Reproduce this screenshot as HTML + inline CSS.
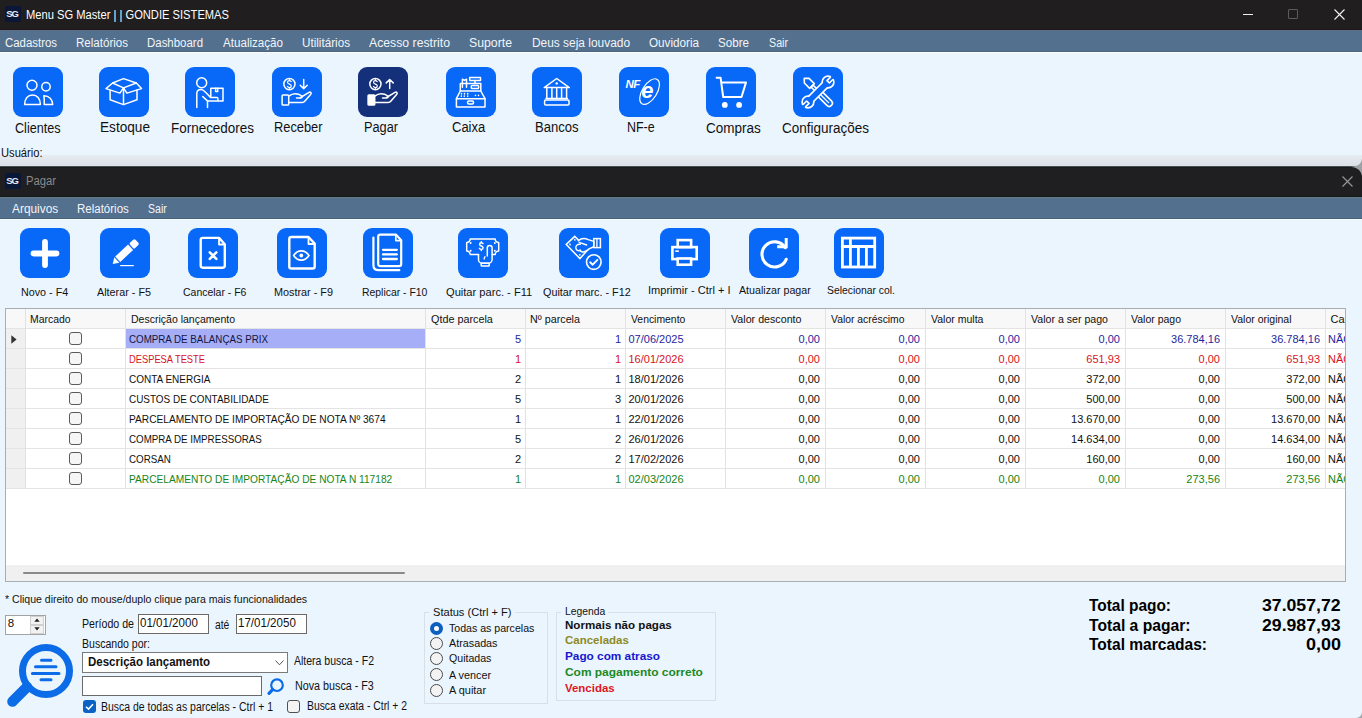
<!DOCTYPE html><html><head><meta charset="utf-8"><style>
html,body{margin:0;padding:0;width:1362px;height:718px;overflow:hidden;background:#ebf5fe;}
body{position:relative;font-family:"Liberation Sans",sans-serif;}
.r{position:absolute;}
.t{position:absolute;white-space:nowrap;transform-origin:0 0;}
svg.r{overflow:visible;}
</style></head><body>
<div class="r" style="left:0px;top:0px;width:1362px;height:30px;background:#201e1f;"></div>
<div class="r" style="left:0px;top:28px;width:1362px;height:2px;background:#22191f;"></div>
<div class="r" style="left:5px;top:6px;width:16px;height:16px;background:#0b1736;border-radius:2px;"></div>
<div class="t" style="left:6.2px;top:9.3px;font-size:9.5px;line-height:9.5px;color:#e8ecf5;font-weight:bold;letter-spacing:-1.1px;">SG</div>
<div class="t" style="left:26.00px;top:8.84px;font-size:12px;line-height:12px;color:#ffffff;transform:scaleX(0.9300);">Menu SG Master | | GONDIE SISTEMAS</div>
<div class="r" style="left:1243px;top:14px;width:10px;height:1px;background:#f0f0f0;"></div>
<div class="r" style="left:1288px;top:9px;width:10px;height:10px;border:1px solid #5c5c5c;box-sizing:border-box;border-radius:1px;"></div>
<svg class="r" style="left:1334px;top:9px" width="11" height="11"><path d="M0.5 0.5L10.5 10.5M10.5 0.5L0.5 10.5" stroke="#f4f4f4" stroke-width="1.1"/></svg>
<div class="r" style="left:0px;top:30px;width:1362px;height:22px;background:#53708f;"></div>
<div class="r" style="left:0px;top:30px;width:1362px;height:1px;background:#5c6e86;"></div>
<div class="r" style="left:0px;top:51px;width:1362px;height:1px;background:#4d6580;"></div>
<div class="t" style="left:5.00px;top:36.84px;font-size:12px;line-height:12px;color:#f2f5f9;transform:scaleX(0.9508);">Cadastros</div>
<div class="t" style="left:76.00px;top:36.84px;font-size:12px;line-height:12px;color:#f2f5f9;transform:scaleX(0.9626);">Relatórios</div>
<div class="t" style="left:147.00px;top:36.84px;font-size:12px;line-height:12px;color:#f2f5f9;transform:scaleX(0.9540);">Dashboard</div>
<div class="t" style="left:223.00px;top:36.84px;font-size:12px;line-height:12px;color:#f2f5f9;transform:scaleX(0.9672);">Atualização</div>
<div class="t" style="left:302.00px;top:36.84px;font-size:12px;line-height:12px;color:#f2f5f9;transform:scaleX(0.9728);">Utilitários</div>
<div class="t" style="left:369.00px;top:36.84px;font-size:12px;line-height:12px;color:#f2f5f9;transform:scaleX(1.0207);">Acesso restrito</div>
<div class="t" style="left:469.00px;top:36.84px;font-size:12px;line-height:12px;color:#f2f5f9;transform:scaleX(1.0232);">Suporte</div>
<div class="t" style="left:532.00px;top:36.84px;font-size:12px;line-height:12px;color:#f2f5f9;transform:scaleX(0.9927);">Deus seja louvado</div>
<div class="t" style="left:649.00px;top:36.84px;font-size:12px;line-height:12px;color:#f2f5f9;transform:scaleX(0.9736);">Ouvidoria</div>
<div class="t" style="left:718.00px;top:36.84px;font-size:12px;line-height:12px;color:#f2f5f9;transform:scaleX(0.9682);">Sobre</div>
<div class="t" style="left:769.00px;top:36.84px;font-size:12px;line-height:12px;color:#f2f5f9;transform:scaleX(0.8904);">Sair</div>
<div class="r" style="left:0px;top:52px;width:1362px;height:114px;background:#ebf5fe;"></div>
<div class="r" style="left:0px;top:52px;width:1362px;height:1px;background:#fbfdff;"></div>
<div class="r" style="left:0px;top:155px;width:1362px;height:11px;background:linear-gradient(#e6ecf2,#dbe0e6);"></div>
<div class="r" style="left:0px;top:166px;width:1362px;height:1px;background:#4a4f52;"></div>
<svg class="r" style="left:13px;top:67px" width="50" height="50" viewBox="0 0 50 50"><rect x="0" y="0" width="50" height="50" rx="9" fill="#0868f8"/><g fill="none" stroke="#fff" stroke-width="1.5" stroke-linecap="round" stroke-linejoin="round"><circle cx="19" cy="18.3" r="5"/><circle cx="33" cy="19.8" r="4.2"/>
<path d="M11.6 37.6C11.6 31.5 15 27.9 19.5 27.9C24 27.9 27.4 31.5 27.4 37.6Z"/>
<path d="M30.9 28.7C36 28.7 39.7 32.4 39.7 37.6L31.2 37.6C31.4 34.5 31.3 31.5 30.9 28.7Z"/></g></svg>
<div class="t" style="left:15.40px;top:121.15px;font-size:14px;line-height:14px;color:#111;transform:scaleX(0.9016);">Clientes</div>
<svg class="r" style="left:99px;top:67px" width="50" height="50" viewBox="0 0 50 50"><rect x="0" y="0" width="50" height="50" rx="9" fill="#0868f8"/><g fill="none" stroke="#fff" stroke-width="1.5" stroke-linecap="round" stroke-linejoin="round"><path d="M11.1 23V32.7L24.5 37.6L38 32.7V23"/>
<path d="M24.5 20.9V37.6"/>
<path d="M13.6 16L24.5 11.6L37.3 16L24.5 20.9Z"/>
<path d="M13.6 16L7 21.6L20.9 26.1L24.5 20.9"/>
<path d="M37.3 16L42.5 21.6L27.9 26.1L24.5 20.9"/></g></svg>
<div class="t" style="left:100.00px;top:120.35px;font-size:14px;line-height:14px;color:#111;transform:scaleX(0.9733);">Estoque</div>
<svg class="r" style="left:185px;top:67px" width="50" height="50" viewBox="0 0 50 50"><rect x="0" y="0" width="50" height="50" rx="9" fill="#0868f8"/><g fill="none" stroke="#fff" stroke-width="1.5" stroke-linecap="round" stroke-linejoin="round"><circle cx="16.7" cy="15.7" r="5"/>
<path d="M11.8 40.4V26.8C11.8 24.3 13.6 22.6 16 22.6C17.8 22.6 19 23.6 20.5 25.2L25.8 30.6H32.2C33.2 30.6 33.2 34.1 32.2 34.1H22.5V40.4"/>
<path d="M17.8 29.6L22.2 33.6"/>
<path d="M25.8 29.6V21.2H38V34.1H33"/>
<path d="M30.6 21.2V24.6H32.7V21.2"/></g></svg>
<div class="t" style="left:171.00px;top:121.15px;font-size:14px;line-height:14px;color:#111;transform:scaleX(0.9610);">Fornecedores</div>
<svg class="r" style="left:272px;top:67px" width="50" height="50" viewBox="0 0 50 50"><rect x="0" y="0" width="50" height="50" rx="9" fill="#0868f8"/><g fill="none" stroke="#fff" stroke-width="1.5" stroke-linecap="round" stroke-linejoin="round"><circle cx="17.4" cy="17.1" r="5.6"/>
<path d="M19.2 14.6C18.7 13.8 18 13.6 17.4 13.6C16.3 13.6 15.5 14.3 15.5 15.3C15.5 17.6 19.3 16.6 19.3 19C19.3 20 18.5 20.6 17.4 20.6C16.6 20.6 15.9 20.2 15.5 19.5M17.4 12.6V13.6M17.4 20.6V21.6" stroke-width="1.2"/>
<path d="M31.7 12.5V21.4M28.2 18.3L31.7 21.6L35.2 18.3"/>
<rect x="10.1" y="27.9" width="6.6" height="10.1" rx="0.8"/>
<path d="M16.7 29.2C18.5 27.9 20.5 26.8 23 26.8C25.5 26.8 28.5 28 30 29C30.8 30 29.5 31.2 28 31H24.5"/>
<path d="M28.5 30.5L37 25.4C38.6 24.6 39.8 26 38.8 27.2L33 34C32.3 35 31.6 35.5 30 35.5H16.7"/></g></svg>
<div class="t" style="left:273.50px;top:120.35px;font-size:14px;line-height:14px;color:#111;transform:scaleX(0.9166);">Receber</div>
<svg class="r" style="left:358px;top:67px" width="50" height="50" viewBox="0 0 50 50"><rect x="0" y="0" width="50" height="50" rx="9" fill="#15307a"/><g fill="none" stroke="#fff" stroke-width="1.5" stroke-linecap="round" stroke-linejoin="round"><circle cx="17.4" cy="17.1" r="5.6"/>
<path d="M19.2 14.6C18.7 13.8 18 13.6 17.4 13.6C16.3 13.6 15.5 14.3 15.5 15.3C15.5 17.6 19.3 16.6 19.3 19C19.3 20 18.5 20.6 17.4 20.6C16.6 20.6 15.9 20.2 15.5 19.5M17.4 12.6V13.6M17.4 20.6V21.6" stroke-width="1.2"/>
<path d="M31.7 21.6V12.7M28.2 15.9L31.7 12.5L35.2 15.9"/>
<rect x="10.1" y="27.9" width="6.6" height="10.1" rx="0.8" fill="#fff"/>
<path d="M16.7 29.2C18.5 27.9 20.5 26.8 23 26.8C25.5 26.8 28.5 28 30 29C30.8 30 29.5 31.2 28 31H24.5"/>
<path d="M28.5 30.5L37 25.4C38.6 24.6 39.8 26 38.8 27.2L33 34C32.3 35 31.6 35.5 30 35.5H16.7"/></g></svg>
<div class="t" style="left:364.00px;top:120.35px;font-size:14px;line-height:14px;color:#111;transform:scaleX(0.9102);">Pagar</div>
<svg class="r" style="left:446px;top:67px" width="50" height="50" viewBox="0 0 50 50"><rect x="0" y="0" width="50" height="50" rx="9" fill="#0868f8"/><g fill="none" stroke="#fff" stroke-width="1.5" stroke-linecap="round" stroke-linejoin="round"><rect x="10.4" y="31.7" width="28.6" height="8.3"/>
<rect x="21.6" y="34.1" width="5.9" height="2.8" rx="1.2"/>
<path d="M10.4 31.7L14.3 24H34.8L39 31.7"/>
<path d="M14.3 24V16.4H34.8V24"/>
<rect x="23.7" y="10.4" width="10.8" height="3.2"/>
<path d="M29 13.6V16.4"/>
<path d="M16.4 20.2V12.2L18.4 13.4L20.5 12.2V20.2"/>
<rect x="25.3" y="18.5" width="7.3" height="3.1" rx="0.8"/>
<path d="M15.5 26.6V26.9M18.5 26.6V26.9M21.7 26.6V26.9M15.3 29V29.3M18.3 29V29.3M21.7 29V29.3M29.5 28.2V28.5M32.5 28.2V28.5" stroke-width="1.5"/></g></svg>
<div class="t" style="left:451.80px;top:120.35px;font-size:14px;line-height:14px;color:#111;transform:scaleX(0.9276);">Caixa</div>
<svg class="r" style="left:532px;top:67px" width="50" height="50" viewBox="0 0 50 50"><rect x="0" y="0" width="50" height="50" rx="9" fill="#0868f8"/><g fill="none" stroke="#fff" stroke-width="1.5" stroke-linecap="round" stroke-linejoin="round"><path d="M12.2 20.6L24.7 11.5L37.3 20.6Z"/>
<circle cx="24.7" cy="16.4" r="1.2" fill="#fff" stroke="none"/>
<path d="M14.8 21.4V31.6M19.9 21.4V31.6M24.7 21.4V31.6M29.6 21.4V31.6M34.6 21.4V31.6"/>
<path d="M14 31.6H35.4"/>
<rect x="12.6" y="33" width="24.4" height="5" rx="1"/></g></svg>
<div class="t" style="left:535.20px;top:120.35px;font-size:14px;line-height:14px;color:#111;transform:scaleX(0.9337);">Bancos</div>
<svg class="r" style="left:619px;top:67px" width="50" height="50" viewBox="0 0 50 50"><rect x="0" y="0" width="50" height="50" rx="9" fill="#0868f8"/><g fill="none" stroke="#fff" stroke-width="1.5" stroke-linecap="round" stroke-linejoin="round"><ellipse cx="30.6" cy="24.6" rx="7.3" ry="14.4" transform="rotate(32 30.6 24.6)" stroke-width="1.2"/>
<text x="6.6" y="21" font-family="Liberation Sans" font-weight="bold" font-style="italic" font-size="11.5" fill="#fff" stroke="none" letter-spacing="-0.6">NF</text>
<text x="22.3" y="31.2" font-family="Liberation Sans" font-weight="bold" font-style="italic" font-size="22" fill="#fff" stroke="none">e</text></g></svg>
<div class="t" style="left:627.40px;top:120.35px;font-size:14px;line-height:14px;color:#111;transform:scaleX(0.8872);">NF-e</div>
<svg class="r" style="left:706px;top:67px" width="50" height="50" viewBox="0 0 50 50"><rect x="0" y="0" width="50" height="50" rx="9" fill="#0868f8"/><g fill="none" stroke="#fff" stroke-width="1.5" stroke-linecap="round" stroke-linejoin="round"><path d="M10.6 10.8H14.6L17.2 30H35.5L40 15.4H15.6" stroke-width="2"/>
<circle cx="18.8" cy="37.9" r="2.9" fill="#fff" stroke="none"/><circle cx="33.1" cy="37.9" r="2.9" fill="#fff" stroke="none"/></g></svg>
<div class="t" style="left:706.00px;top:121.15px;font-size:14px;line-height:14px;color:#111;transform:scaleX(0.9650);">Compras</div>
<svg class="r" style="left:793px;top:67px" width="50" height="50" viewBox="0 0 50 50"><rect x="0" y="0" width="50" height="50" rx="9" fill="#0868f8"/><g fill="none" stroke="#fff" stroke-width="1.5" stroke-linecap="round" stroke-linejoin="round"><g transform="rotate(45 25 25)" stroke-width="1.6">
<path d="M5.5 25L9 21.7H16.5V28.3H9Z"/>
<rect x="16.5" y="23.6" width="7.5" height="2.8"/>
<rect x="25.5" y="21.8" width="18.5" height="6.4" rx="3.2"/>
<path d="M29.5 25H40" stroke-width="1.3"/>
</g>
<g transform="rotate(-45 25 25)">
<g stroke-width="3.4"><rect x="13" y="22.3" width="24" height="5.4"/><circle cx="10.8" cy="25" r="5"/><circle cx="39.2" cy="25" r="5"/></g>
<g fill="#0868f8" stroke="none"><rect x="13" y="22.3" width="24" height="5.4"/><circle cx="10.8" cy="25" r="5"/><circle cx="39.2" cy="25" r="5"/><rect x="4" y="23.3" width="6.8" height="3.4"/><rect x="39.2" y="23.3" width="7" height="3.4"/></g>
<path d="M5.3 23.3H10.6V26.7H5.3M44.7 23.3H39.4V26.7H44.7" stroke-width="1.6" stroke-linecap="butt"/>
</g></g></svg>
<div class="t" style="left:782.00px;top:121.15px;font-size:14px;line-height:14px;color:#111;transform:scaleX(0.9638);">Configurações</div>
<div class="t" style="left:1.00px;top:147.34px;font-size:12px;line-height:12px;color:#111;transform:scaleX(0.9310);">Usuário:</div>
<div class="r" style="left:0px;top:167px;width:1362px;height:30px;background:#1f1f21;"></div>
<div class="r" style="left:0px;top:167px;width:1362px;height:1px;background:#17191a;"></div>
<div class="r" style="left:0px;top:196px;width:1362px;height:1px;background:#111a1a;"></div>
<div class="r" style="left:5px;top:173px;width:16px;height:16px;background:#0b1736;border-radius:2px;"></div>
<div class="t" style="left:6.2px;top:176.3px;font-size:9.5px;line-height:9.5px;color:#e8ecf5;font-weight:bold;letter-spacing:-1.1px;">SG</div>
<div class="t" style="left:25.60px;top:175.44px;font-size:12px;line-height:12px;color:#8a8a8a;transform:scaleX(0.9369);">Pagar</div>
<svg class="r" style="left:1342px;top:176px" width="11" height="11"><path d="M0.5 0.5L10.5 10.5M10.5 0.5L0.5 10.5" stroke="#9a9a9a" stroke-width="1.1"/></svg>
<svg class="r" style="left:1348px;top:158px" width="14" height="20"><path d="M14 1C13 6 10 8 5 8.5L3 9C9 9.5 13 12 14 18Z" fill="#9ea2a6"/></svg>
<div class="r" style="left:0px;top:197px;width:1362px;height:22px;background:#53708f;"></div>
<div class="r" style="left:0px;top:197px;width:1362px;height:1px;background:#657a86;"></div>
<div class="r" style="left:0px;top:218px;width:1362px;height:1px;background:#4a6078;"></div>
<div class="t" style="left:11.60px;top:202.84px;font-size:12px;line-height:12px;color:#f2f5f9;transform:scaleX(0.9896);">Arquivos</div>
<div class="t" style="left:77.00px;top:202.84px;font-size:12px;line-height:12px;color:#f2f5f9;transform:scaleX(0.9589);">Relatórios</div>
<div class="t" style="left:148.00px;top:202.84px;font-size:12px;line-height:12px;color:#f2f5f9;transform:scaleX(0.8810);">Sair</div>
<div class="r" style="left:0px;top:219px;width:1362px;height:499px;background:#ebf5fe;"></div>
<div class="r" style="left:0px;top:219px;width:1362px;height:1px;background:#f0fdff;"></div>
<svg class="r" style="left:20px;top:228px" width="50" height="50" viewBox="0 0 50 50"><rect x="0" y="0" width="50" height="50" rx="9" fill="#0868f8"/><g fill="none" stroke="#fff" stroke-width="1.8" stroke-linecap="round" stroke-linejoin="round"><path d="M25 14V37M13.5 25.5H36.5" stroke-width="5.8"/></g></svg>
<div class="t" style="left:20.60px;top:286.69px;font-size:11px;line-height:11px;color:#111;transform:scaleX(0.9775);">Novo - F4</div>
<svg class="r" style="left:100px;top:228px" width="50" height="50" viewBox="0 0 50 50"><rect x="0" y="0" width="50" height="50" rx="9" fill="#0868f8"/><g fill="none" stroke="#fff" stroke-width="1.8" stroke-linecap="round" stroke-linejoin="round"><g transform="rotate(-43 25 25)" fill="#fff" stroke="none">
<path d="M8.6 24.6L14.2 20.9V28.3Z"/>
<rect x="15.4" y="20.9" width="17.6" height="7.4"/>
<rect x="34.3" y="20.9" width="7.4" height="7.4" rx="1.6"/>
</g>
<path d="M20.2 37.6H33.8" stroke-width="1.2" stroke-linecap="butt"/></g></svg>
<div class="t" style="left:97.00px;top:286.69px;font-size:11px;line-height:11px;color:#111;transform:scaleX(0.9817);">Alterar - F5</div>
<svg class="r" style="left:188px;top:228px" width="50" height="50" viewBox="0 0 50 50"><rect x="0" y="0" width="50" height="50" rx="9" fill="#0868f8"/><g fill="none" stroke="#fff" stroke-width="1.8" stroke-linecap="round" stroke-linejoin="round"><path d="M14.8 9.9H31L36.8 16.2V37.6C36.8 38.9 36 39.7 34.7 39.7H14.8C13.5 39.7 12.7 38.9 12.7 37.6V12C12.7 10.7 13.5 9.9 14.8 9.9Z" stroke-width="2.4"/>
<path d="M31 10.6V16.5H36.2" stroke-width="1.8"/>
<path d="M21.8 24.4L28.3 30.9M28.3 24.4L21.8 30.9" stroke-width="2.6"/></g></svg>
<div class="t" style="left:182.70px;top:286.69px;font-size:11px;line-height:11px;color:#111;transform:scaleX(0.9515);">Cancelar - F6</div>
<svg class="r" style="left:277px;top:228px" width="50" height="50" viewBox="0 0 50 50"><rect x="0" y="0" width="50" height="50" rx="9" fill="#0868f8"/><g fill="none" stroke="#fff" stroke-width="1.8" stroke-linecap="round" stroke-linejoin="round"><path d="M14.4 9H31.5L37.7 15.6V38.4C37.7 39.7 36.9 40.5 35.6 40.5H14.4C13.1 40.5 12.3 39.7 12.3 38.4V11.1C12.3 9.8 13.1 9 14.4 9Z" stroke-width="2.4"/>
<path d="M31.5 9.8V16H37" stroke-width="1.8"/>
<path d="M16.6 27.5C18.6 24.5 21.3 22.9 24.3 22.9C27.3 22.9 30 24.5 32 27.5C30 30.5 27.3 32.1 24.3 32.1C21.3 32.1 18.6 30.5 16.6 27.5Z" stroke-width="1.6"/>
<circle cx="24.3" cy="27.5" r="1.9" fill="#fff" stroke="none"/></g></svg>
<div class="t" style="left:273.50px;top:286.69px;font-size:11px;line-height:11px;color:#111;transform:scaleX(0.9852);">Mostrar - F9</div>
<svg class="r" style="left:363px;top:228px" width="50" height="50" viewBox="0 0 50 50"><rect x="0" y="0" width="50" height="50" rx="9" fill="#0868f8"/><g fill="none" stroke="#fff" stroke-width="1.8" stroke-linecap="round" stroke-linejoin="round"><path d="M10.4 9.5V37C10.4 40 12.3 42.2 15.5 42.2H36.3" stroke-width="2.2"/>
<path d="M17.3 6.6H32.8L38.2 12.3V36C38.2 37.3 37.4 38.1 36.1 38.1H17.3C16 38.1 15.2 37.3 15.2 36V8.7C15.2 7.4 16 6.6 17.3 6.6Z" stroke-width="2.2"/>
<path d="M32.8 7.2V12.6H37.7" stroke-width="1.6"/>
<path d="M20 21.8H33.8M20 26.4H33.8M20 31H33.8" stroke-width="2.3"/></g></svg>
<div class="t" style="left:361.60px;top:286.69px;font-size:11px;line-height:11px;color:#111;transform:scaleX(0.9468);">Replicar - F10</div>
<svg class="r" style="left:458px;top:228px" width="50" height="50" viewBox="0 0 50 50"><rect x="0" y="0" width="50" height="50" rx="9" fill="#0868f8"/><g fill="none" stroke="#fff" stroke-width="1.8" stroke-linecap="round" stroke-linejoin="round"><path d="M12.2 11.1H37.2A3.5 3.5 0 0 0 40.7 14.6V23A3.5 3.5 0 0 0 37.2 26.5H34.3M20.5 26.5H12.2A3.5 3.5 0 0 0 8.7 23V14.6A3.5 3.5 0 0 0 12.2 11.1" stroke-width="1.5"/>
<circle cx="12.6" cy="14.9" r="1" fill="#fff" stroke="none"/><circle cx="36.8" cy="14.9" r="1" fill="#fff" stroke="none"/><circle cx="12.6" cy="22.7" r="1" fill="#fff" stroke="none"/><circle cx="36.8" cy="22.7" r="1" fill="#fff" stroke="none"/>
<path d="M25 15.6C24.6 15 24 14.8 23.3 14.8C22.3 14.8 21.6 15.4 21.6 16.3C21.6 18.5 25.1 17.5 25.1 19.8C25.1 20.8 24.3 21.4 23.3 21.4C22.5 21.4 21.8 21 21.4 20.3M23.3 13.6V14.8M23.3 21.4V22.6" stroke-width="1.4"/>
<path d="M29.3 28V19.8A2.4 2.4 0 0 1 34.1 19.8V31.2C34.1 33.4 32.6 35.2 30.5 35.2H24C22 35.2 20.5 33.5 20.5 31.5V26.5" stroke-width="1.5"/>
<path d="M26.9 28.6L26.1 31" stroke-width="1.3"/>
<rect x="23.2" y="35.2" width="8" height="2.8" rx="0.6" stroke-width="1.5"/></g></svg>
<div class="t" style="left:445.50px;top:286.69px;font-size:11px;line-height:11px;color:#111;transform:scaleX(1.0097);">Quitar parc. - F11</div>
<svg class="r" style="left:559px;top:228px" width="50" height="50" viewBox="0 0 50 50"><rect x="0" y="0" width="50" height="50" rx="9" fill="#0868f8"/><g fill="none" stroke="#fff" stroke-width="1.8" stroke-linecap="round" stroke-linejoin="round"><path d="M7.3 16.4L15.7 8.4L29 21.5L20.9 30.6Z" stroke-width="1.5" stroke-linejoin="miter"/>
<circle cx="11" cy="16.5" r="0.9" fill="#fff" stroke="none"/><circle cx="15.8" cy="11.8" r="0.9" fill="#fff" stroke="none"/><circle cx="20.8" cy="26.8" r="0.9" fill="#fff" stroke="none"/>
<path d="M19.3 12.8C22 10.4 26 10.2 29.2 11.6L34.8 13.4V18.8L30.5 20.6C28.6 22.3 26.6 23.6 24.6 23.9C22.6 24.2 21.3 23.2 21.1 21.9" fill="#0868f8" stroke-width="1.5"/>
<path d="M21.3 16.4C18.9 15.7 16.6 17.4 16.8 19.9C17 22.1 19.2 23.2 21.2 22.4M20.2 14.3L27.6 17" stroke-width="1.4"/>
<rect x="34.8" y="10.6" width="6.6" height="9" stroke-width="1.5" stroke-linejoin="miter"/>
<path d="M37.9 10.6V19.6" stroke-width="1.3"/>
<circle cx="34.8" cy="34.1" r="7.3" stroke-width="1.6"/>
<path d="M31.2 34.3L33.7 36.7L38.4 31.9" stroke-width="1.9"/></g></svg>
<div class="t" style="left:542.80px;top:286.69px;font-size:11px;line-height:11px;color:#111;transform:scaleX(0.9828);">Quitar marc. - F12</div>
<svg class="r" style="left:660px;top:228px" width="50" height="50" viewBox="0 0 50 50"><rect x="0" y="0" width="50" height="50" rx="9" fill="#0868f8"/><g fill="none" stroke="#fff" stroke-width="1.8" stroke-linecap="round" stroke-linejoin="round"><rect x="17.7" y="12.1" width="13.4" height="7" stroke-width="2.6" stroke-linejoin="miter"/>
<rect x="12.4" y="19.1" width="24.3" height="12" stroke-width="2.6" stroke-linejoin="miter"/>
<rect x="17.7" y="30.5" width="13.4" height="6.2" fill="#0868f8" stroke-width="2.6" stroke-linejoin="miter"/>
<rect x="15.3" y="22.3" width="3.5" height="1.7" fill="#fff" stroke="none"/></g></svg>
<div class="t" style="left:647.50px;top:284.69px;font-size:11px;line-height:11px;color:#111;transform:scaleX(1.0038);">Imprimir - Ctrl + I</div>
<svg class="r" style="left:749px;top:228px" width="50" height="50" viewBox="0 0 50 50"><rect x="0" y="0" width="50" height="50" rx="9" fill="#0868f8"/><g fill="none" stroke="#fff" stroke-width="1.8" stroke-linecap="round" stroke-linejoin="round"><path d="M36.2 19.6A12.6 12.6 0 1 0 37.2 31.3" stroke-width="3.1"/>
<path d="M28.2 18.7H37.2V10.1" stroke-width="3" stroke-linecap="butt" stroke-linejoin="miter"/></g></svg>
<div class="t" style="left:738.70px;top:284.69px;font-size:11px;line-height:11px;color:#111;transform:scaleX(0.9705);">Atualizar pagar</div>
<svg class="r" style="left:834px;top:228px" width="50" height="50" viewBox="0 0 50 50"><rect x="0" y="0" width="50" height="50" rx="9" fill="#0868f8"/><g fill="none" stroke="#fff" stroke-width="1.8" stroke-linecap="round" stroke-linejoin="round"><rect x="8.4" y="10.1" width="32.3" height="28.9" stroke-width="2.8" stroke-linejoin="miter"/>
<path d="M8.4 18.4H40.7" stroke-width="3"/>
<path d="M16.4 10V39M24.4 18.4V39M32.4 18.4V39" stroke-width="2.8" stroke-linecap="butt"/></g></svg>
<div class="t" style="left:827.40px;top:284.69px;font-size:11px;line-height:11px;color:#111;transform:scaleX(0.9425);">Selecionar col.</div>
<div class="r" style="left:5px;top:308px;width:1341px;height:274px;background:#fff;border:1px solid #a9aeb3;box-sizing:border-box;"></div>
<div class="r" style="left:6px;top:309px;width:1339px;height:256px;overflow:hidden;">
<div class="r" style="left:0px;top:0px;width:1339px;height:19px;background:#f8f8f8;"></div><div class="r" style="left:0px;top:20px;width:19px;height:160px;background:#f0f0f0;"></div><div class="r" style="left:119px;top:0px;width:1px;height:180px;background:#e2e2e2;"></div><div class="t" style="left:24.40px;top:4.69px;font-size:11px;line-height:11px;color:#111;transform:scaleX(0.9487);">Marcado</div><div class="r" style="left:419px;top:0px;width:1px;height:180px;background:#e2e2e2;"></div><div class="t" style="left:124.50px;top:4.69px;font-size:11px;line-height:11px;color:#111;transform:scaleX(0.9557);">Descrição lançamento</div><div class="r" style="left:519px;top:0px;width:1px;height:180px;background:#e2e2e2;"></div><div class="t" style="left:424.60px;top:4.69px;font-size:11px;line-height:11px;color:#111;transform:scaleX(0.9813);">Qtde parcela</div><div class="r" style="left:619px;top:0px;width:1px;height:180px;background:#e2e2e2;"></div><div class="t" style="left:524.40px;top:4.69px;font-size:11px;line-height:11px;color:#111;transform:scaleX(0.9786);">Nº parcela</div><div class="r" style="left:719px;top:0px;width:1px;height:180px;background:#e2e2e2;"></div><div class="t" style="left:624.80px;top:4.69px;font-size:11px;line-height:11px;color:#111;transform:scaleX(0.9447);">Vencimento</div><div class="r" style="left:819px;top:0px;width:1px;height:180px;background:#e2e2e2;"></div><div class="t" style="left:724.60px;top:4.69px;font-size:11px;line-height:11px;color:#111;transform:scaleX(0.9716);">Valor desconto</div><div class="r" style="left:919px;top:0px;width:1px;height:180px;background:#e2e2e2;"></div><div class="t" style="left:824.90px;top:4.69px;font-size:11px;line-height:11px;color:#111;transform:scaleX(0.9418);">Valor acréscimo</div><div class="r" style="left:1019px;top:0px;width:1px;height:180px;background:#e2e2e2;"></div><div class="t" style="left:924.80px;top:4.69px;font-size:11px;line-height:11px;color:#111;transform:scaleX(0.9560);">Valor multa</div><div class="r" style="left:1119px;top:0px;width:1px;height:180px;background:#e2e2e2;"></div><div class="t" style="left:1025.00px;top:4.69px;font-size:11px;line-height:11px;color:#111;transform:scaleX(0.9638);">Valor a ser pago</div><div class="r" style="left:1219px;top:0px;width:1px;height:180px;background:#e2e2e2;"></div><div class="t" style="left:1125.20px;top:4.69px;font-size:11px;line-height:11px;color:#111;transform:scaleX(0.9545);">Valor pago</div><div class="r" style="left:1319px;top:0px;width:1px;height:180px;background:#e2e2e2;"></div><div class="t" style="left:1225.10px;top:4.69px;font-size:11px;line-height:11px;color:#111;transform:scaleX(0.9546);">Valor original</div><div class="r" style="left:1419px;top:0px;width:1px;height:180px;background:#e2e2e2;"></div><div class="t" style="left:1324.60px;top:4.69px;font-size:11px;line-height:11px;color:#111;">Cancelada</div><div class="r" style="left:19px;top:0px;width:1px;height:180px;background:#e2e2e2;"></div><div class="r" style="left:0px;top:19px;width:1339px;height:1px;background:#e4e4e4;"></div><div class="r" style="left:0px;top:39px;width:1339px;height:1px;background:#e4e4e4;"></div><div class="r" style="left:0px;top:59px;width:1339px;height:1px;background:#e4e4e4;"></div><div class="r" style="left:0px;top:79px;width:1339px;height:1px;background:#e4e4e4;"></div><div class="r" style="left:0px;top:99px;width:1339px;height:1px;background:#e4e4e4;"></div><div class="r" style="left:0px;top:119px;width:1339px;height:1px;background:#e4e4e4;"></div><div class="r" style="left:0px;top:139px;width:1339px;height:1px;background:#e4e4e4;"></div><div class="r" style="left:0px;top:159px;width:1339px;height:1px;background:#e4e4e4;"></div><div class="r" style="left:0px;top:179px;width:1339px;height:1px;background:#e4e4e4;"></div><div class="r" style="left:63px;top:23px;width:13px;height:13px;border:1px solid #5a5a5a;border-radius:3px;box-sizing:border-box;background:#f6f6f6;"></div><div class="r" style="left:120px;top:20px;width:299px;height:19px;background:#a5aef7;"></div><div class="t" style="left:122.80px;top:24.89px;font-size:11px;line-height:11px;color:#141440;transform:scaleX(0.8882);">COMPRA DE BALANÇAS PRIX</div><svg class="r" style="left:5px;top:25.5px" width="6" height="9"><path d="M0.3 0.2L5.6 4.5L0.3 8.8Z" fill="#333"/></svg><div class="t" style="left:508.88px;top:24.89px;font-size:11px;line-height:11px;color:#1f1fa0;">5</div><div class="t" style="left:608.88px;top:24.89px;font-size:11px;line-height:11px;color:#1f1fa0;">1</div><div class="t" style="left:622.50px;top:24.89px;font-size:11px;line-height:11px;color:#1f1fa0;">07/06/2025</div><div class="t" style="left:792.59px;top:24.89px;font-size:11px;line-height:11px;color:#1f1fa0;">0,00</div><div class="t" style="left:892.59px;top:24.89px;font-size:11px;line-height:11px;color:#1f1fa0;">0,00</div><div class="t" style="left:992.59px;top:24.89px;font-size:11px;line-height:11px;color:#1f1fa0;">0,00</div><div class="t" style="left:1092.59px;top:24.89px;font-size:11px;line-height:11px;color:#1f1fa0;">0,00</div><div class="t" style="left:1165.07px;top:24.89px;font-size:11px;line-height:11px;color:#1f1fa0;">36.784,16</div><div class="t" style="left:1265.07px;top:24.89px;font-size:11px;line-height:11px;color:#1f1fa0;">36.784,16</div><div class="t" style="left:1322.00px;top:24.89px;font-size:11px;line-height:11px;color:#1f1fa0;">NÃO</div><div class="r" style="left:63px;top:43px;width:13px;height:13px;border:1px solid #5a5a5a;border-radius:3px;box-sizing:border-box;background:#f6f6f6;"></div><div class="t" style="left:122.80px;top:44.89px;font-size:11px;line-height:11px;color:#d4141e;transform:scaleX(0.8476);">DESPESA TESTE</div><div class="t" style="left:508.88px;top:44.89px;font-size:11px;line-height:11px;color:#d4141e;">1</div><div class="t" style="left:608.88px;top:44.89px;font-size:11px;line-height:11px;color:#d4141e;">1</div><div class="t" style="left:622.50px;top:44.89px;font-size:11px;line-height:11px;color:#d4141e;">16/01/2026</div><div class="t" style="left:792.59px;top:44.89px;font-size:11px;line-height:11px;color:#d4141e;">0,00</div><div class="t" style="left:892.59px;top:44.89px;font-size:11px;line-height:11px;color:#d4141e;">0,00</div><div class="t" style="left:992.59px;top:44.89px;font-size:11px;line-height:11px;color:#d4141e;">0,00</div><div class="t" style="left:1080.36px;top:44.89px;font-size:11px;line-height:11px;color:#d4141e;">651,93</div><div class="t" style="left:1192.59px;top:44.89px;font-size:11px;line-height:11px;color:#d4141e;">0,00</div><div class="t" style="left:1280.36px;top:44.89px;font-size:11px;line-height:11px;color:#d4141e;">651,93</div><div class="t" style="left:1322.00px;top:44.89px;font-size:11px;line-height:11px;color:#d4141e;">NÃO</div><div class="r" style="left:63px;top:63px;width:13px;height:13px;border:1px solid #5a5a5a;border-radius:3px;box-sizing:border-box;background:#f6f6f6;"></div><div class="t" style="left:122.80px;top:64.89px;font-size:11px;line-height:11px;color:#111;transform:scaleX(0.9080);">CONTA ENERGIA</div><div class="t" style="left:508.88px;top:64.89px;font-size:11px;line-height:11px;color:#111;">2</div><div class="t" style="left:608.88px;top:64.89px;font-size:11px;line-height:11px;color:#111;">1</div><div class="t" style="left:622.50px;top:64.89px;font-size:11px;line-height:11px;color:#111;">18/01/2026</div><div class="t" style="left:792.59px;top:64.89px;font-size:11px;line-height:11px;color:#111;">0,00</div><div class="t" style="left:892.59px;top:64.89px;font-size:11px;line-height:11px;color:#111;">0,00</div><div class="t" style="left:992.59px;top:64.89px;font-size:11px;line-height:11px;color:#111;">0,00</div><div class="t" style="left:1080.36px;top:64.89px;font-size:11px;line-height:11px;color:#111;">372,00</div><div class="t" style="left:1192.59px;top:64.89px;font-size:11px;line-height:11px;color:#111;">0,00</div><div class="t" style="left:1280.36px;top:64.89px;font-size:11px;line-height:11px;color:#111;">372,00</div><div class="t" style="left:1322.00px;top:64.89px;font-size:11px;line-height:11px;color:#111;">NÃO</div><div class="r" style="left:63px;top:83px;width:13px;height:13px;border:1px solid #5a5a5a;border-radius:3px;box-sizing:border-box;background:#f6f6f6;"></div><div class="t" style="left:122.80px;top:84.89px;font-size:11px;line-height:11px;color:#111;transform:scaleX(0.9028);">CUSTOS DE CONTABILIDADE</div><div class="t" style="left:508.88px;top:84.89px;font-size:11px;line-height:11px;color:#111;">5</div><div class="t" style="left:608.88px;top:84.89px;font-size:11px;line-height:11px;color:#111;">3</div><div class="t" style="left:622.50px;top:84.89px;font-size:11px;line-height:11px;color:#111;">20/01/2026</div><div class="t" style="left:792.59px;top:84.89px;font-size:11px;line-height:11px;color:#111;">0,00</div><div class="t" style="left:892.59px;top:84.89px;font-size:11px;line-height:11px;color:#111;">0,00</div><div class="t" style="left:992.59px;top:84.89px;font-size:11px;line-height:11px;color:#111;">0,00</div><div class="t" style="left:1080.36px;top:84.89px;font-size:11px;line-height:11px;color:#111;">500,00</div><div class="t" style="left:1192.59px;top:84.89px;font-size:11px;line-height:11px;color:#111;">0,00</div><div class="t" style="left:1280.36px;top:84.89px;font-size:11px;line-height:11px;color:#111;">500,00</div><div class="t" style="left:1322.00px;top:84.89px;font-size:11px;line-height:11px;color:#111;">NÃO</div><div class="r" style="left:63px;top:103px;width:13px;height:13px;border:1px solid #5a5a5a;border-radius:3px;box-sizing:border-box;background:#f6f6f6;"></div><div class="t" style="left:122.80px;top:104.89px;font-size:11px;line-height:11px;color:#111;transform:scaleX(0.9248);">PARCELAMENTO DE IMPORTAÇÃO DE NOTA Nº 3674</div><div class="t" style="left:508.88px;top:104.89px;font-size:11px;line-height:11px;color:#111;">1</div><div class="t" style="left:608.88px;top:104.89px;font-size:11px;line-height:11px;color:#111;">1</div><div class="t" style="left:622.50px;top:104.89px;font-size:11px;line-height:11px;color:#111;">22/01/2026</div><div class="t" style="left:792.59px;top:104.89px;font-size:11px;line-height:11px;color:#111;">0,00</div><div class="t" style="left:892.59px;top:104.89px;font-size:11px;line-height:11px;color:#111;">0,00</div><div class="t" style="left:992.59px;top:104.89px;font-size:11px;line-height:11px;color:#111;">0,00</div><div class="t" style="left:1065.07px;top:104.89px;font-size:11px;line-height:11px;color:#111;">13.670,00</div><div class="t" style="left:1192.59px;top:104.89px;font-size:11px;line-height:11px;color:#111;">0,00</div><div class="t" style="left:1265.07px;top:104.89px;font-size:11px;line-height:11px;color:#111;">13.670,00</div><div class="t" style="left:1322.00px;top:104.89px;font-size:11px;line-height:11px;color:#111;">NÃO</div><div class="r" style="left:63px;top:123px;width:13px;height:13px;border:1px solid #5a5a5a;border-radius:3px;box-sizing:border-box;background:#f6f6f6;"></div><div class="t" style="left:122.80px;top:124.89px;font-size:11px;line-height:11px;color:#111;transform:scaleX(0.8868);">COMPRA DE IMPRESSORAS</div><div class="t" style="left:508.88px;top:124.89px;font-size:11px;line-height:11px;color:#111;">5</div><div class="t" style="left:608.88px;top:124.89px;font-size:11px;line-height:11px;color:#111;">2</div><div class="t" style="left:622.50px;top:124.89px;font-size:11px;line-height:11px;color:#111;">26/01/2026</div><div class="t" style="left:792.59px;top:124.89px;font-size:11px;line-height:11px;color:#111;">0,00</div><div class="t" style="left:892.59px;top:124.89px;font-size:11px;line-height:11px;color:#111;">0,00</div><div class="t" style="left:992.59px;top:124.89px;font-size:11px;line-height:11px;color:#111;">0,00</div><div class="t" style="left:1065.07px;top:124.89px;font-size:11px;line-height:11px;color:#111;">14.634,00</div><div class="t" style="left:1192.59px;top:124.89px;font-size:11px;line-height:11px;color:#111;">0,00</div><div class="t" style="left:1265.07px;top:124.89px;font-size:11px;line-height:11px;color:#111;">14.634,00</div><div class="t" style="left:1322.00px;top:124.89px;font-size:11px;line-height:11px;color:#111;">NÃO</div><div class="r" style="left:63px;top:143px;width:13px;height:13px;border:1px solid #5a5a5a;border-radius:3px;box-sizing:border-box;background:#f6f6f6;"></div><div class="t" style="left:122.80px;top:144.89px;font-size:11px;line-height:11px;color:#111;transform:scaleX(0.8882);">CORSAN</div><div class="t" style="left:508.88px;top:144.89px;font-size:11px;line-height:11px;color:#111;">2</div><div class="t" style="left:608.88px;top:144.89px;font-size:11px;line-height:11px;color:#111;">2</div><div class="t" style="left:622.50px;top:144.89px;font-size:11px;line-height:11px;color:#111;">17/02/2026</div><div class="t" style="left:792.59px;top:144.89px;font-size:11px;line-height:11px;color:#111;">0,00</div><div class="t" style="left:892.59px;top:144.89px;font-size:11px;line-height:11px;color:#111;">0,00</div><div class="t" style="left:992.59px;top:144.89px;font-size:11px;line-height:11px;color:#111;">0,00</div><div class="t" style="left:1080.36px;top:144.89px;font-size:11px;line-height:11px;color:#111;">160,00</div><div class="t" style="left:1192.59px;top:144.89px;font-size:11px;line-height:11px;color:#111;">0,00</div><div class="t" style="left:1280.36px;top:144.89px;font-size:11px;line-height:11px;color:#111;">160,00</div><div class="t" style="left:1322.00px;top:144.89px;font-size:11px;line-height:11px;color:#111;">NÃO</div><div class="r" style="left:63px;top:163px;width:13px;height:13px;border:1px solid #5a5a5a;border-radius:3px;box-sizing:border-box;background:#f6f6f6;"></div><div class="t" style="left:122.80px;top:164.89px;font-size:11px;line-height:11px;color:#178417;transform:scaleX(0.9240);">PARCELAMENTO DE IMPORTAÇÃO DE NOTA N 117182</div><div class="t" style="left:508.88px;top:164.89px;font-size:11px;line-height:11px;color:#178417;">1</div><div class="t" style="left:608.88px;top:164.89px;font-size:11px;line-height:11px;color:#178417;">1</div><div class="t" style="left:622.50px;top:164.89px;font-size:11px;line-height:11px;color:#178417;">02/03/2026</div><div class="t" style="left:792.59px;top:164.89px;font-size:11px;line-height:11px;color:#178417;">0,00</div><div class="t" style="left:892.59px;top:164.89px;font-size:11px;line-height:11px;color:#178417;">0,00</div><div class="t" style="left:992.59px;top:164.89px;font-size:11px;line-height:11px;color:#178417;">0,00</div><div class="t" style="left:1092.59px;top:164.89px;font-size:11px;line-height:11px;color:#178417;">0,00</div><div class="t" style="left:1180.36px;top:164.89px;font-size:11px;line-height:11px;color:#178417;">273,56</div><div class="t" style="left:1280.36px;top:164.89px;font-size:11px;line-height:11px;color:#178417;">273,56</div><div class="t" style="left:1322.00px;top:164.89px;font-size:11px;line-height:11px;color:#178417;">NÃO</div><div class="r" style="left:0px;top:256px;width:1339px;height:16px;background:#f0f0f0;"></div><div class="r" style="left:17px;top:263px;width:382px;height:2px;background:#8a8a8a;border-radius:1px;"></div>
</div>
<div class="r" style="left:6px;top:565px;width:1339px;height:16px;background:#f0f0f0;"></div>
<div class="r" style="left:23px;top:572px;width:382px;height:2px;background:#8a8a8a;border-radius:1px;"></div>
<div class="t" style="left:5.00px;top:593.69px;font-size:11px;line-height:11px;color:#111;transform:scaleX(0.9572);">* Clique direito do mouse/duplo clique para mais funcionalidades</div>
<div class="r" style="left:5px;top:615px;width:41px;height:20px;background:#fff;border:1px solid #a3a3a3;box-sizing:border-box;"></div>
<div class="t" style="left:7.70px;top:618.27px;font-size:11.5px;line-height:11.5px;color:#111;">8</div>
<div class="r" style="left:30px;top:616px;width:14px;height:9px;background:#f2f2f2;border:1px solid #d0d0d0;box-sizing:border-box;"></div>
<div class="r" style="left:30px;top:625px;width:14px;height:9px;background:#f2f2f2;border:1px solid #d0d0d0;box-sizing:border-box;"></div>
<svg class="r" style="left:30px;top:616px" width="14" height="18"><path d="M4.3 5.8L7 2.6L9.7 5.8Z M4.3 11.2L7 14.4L9.7 11.2Z" fill="#222"/></svg>
<svg class="r" style="left:0px;top:640px" width="80" height="78"><g stroke="#0c6be6" fill="none" stroke-linecap="round"><circle cx="46" cy="31" r="23.5" stroke-width="7"/><path d="M27 47L12.5 61.5" stroke-width="10.5"/><path d="M41.5 20.3H51M35.5 26.8H56M32.4 33.6H59M41 39.8H51" stroke-width="3"/></g></svg>
<div class="t" style="left:82.00px;top:617.84px;font-size:12px;line-height:12px;color:#111;transform:scaleX(0.8858);">Período de</div>
<div class="r" style="left:138px;top:614px;width:71px;height:20px;background:#fff;border:1px solid #6a6a6a;box-sizing:border-box;"></div>
<div class="t" style="left:139.80px;top:616.94px;font-size:12px;line-height:12px;color:#111;transform:scaleX(0.9625);">01/01/2000</div>
<div class="t" style="left:214.70px;top:618.84px;font-size:12px;line-height:12px;color:#111;transform:scaleX(0.8573);">até</div>
<div class="r" style="left:236px;top:614px;width:71px;height:20px;background:#fff;border:1px solid #6a6a6a;box-sizing:border-box;"></div>
<div class="t" style="left:238.10px;top:616.94px;font-size:12px;line-height:12px;color:#111;transform:scaleX(0.9625);">17/01/2050</div>
<div class="t" style="left:82.00px;top:637.84px;font-size:12px;line-height:12px;color:#111;transform:scaleX(0.8788);">Buscando por:</div>
<div class="r" style="left:82px;top:652px;width:206px;height:21px;background:#fff;border:1px solid #7a7a7a;box-sizing:border-box;"></div>
<div class="t" style="left:87.50px;top:655.84px;font-size:12px;line-height:12px;color:#111;font-weight:bold;transform:scaleX(0.9578);">Descrição lançamento</div>
<svg class="r" style="left:275px;top:659.5px" width="9" height="6"><path d="M0.5 0.5L4.5 4.8L8.5 0.5" stroke="#555" fill="none" stroke-width="1"/></svg>
<div class="t" style="left:294.00px;top:655.44px;font-size:12px;line-height:12px;color:#111;transform:scaleX(0.8756);">Altera busca - F2</div>
<div class="r" style="left:82px;top:676px;width:180px;height:20px;background:#fff;border:1px solid #6a6a6a;box-sizing:border-box;"></div>
<svg class="r" style="left:264px;top:675px" width="24" height="22"><g stroke="#0c6be6" fill="none" stroke-linecap="round"><circle cx="13" cy="10.2" r="5.8" stroke-width="2.2"/><path d="M8.6 14.6L5 18.3" stroke-width="3.2"/></g></svg>
<div class="t" style="left:295.20px;top:680.34px;font-size:12px;line-height:12px;color:#111;transform:scaleX(0.8951);">Nova busca - F3</div>
<div class="r" style="left:83px;top:700px;width:13px;height:13px;background:#0a63c4;border-radius:3px;"></div>
<svg class="r" style="left:83px;top:700px" width="13" height="13"><path d="M3 6.7L5.5 9.1L10 4.3" stroke="#fff" fill="none" stroke-width="1.5"/></svg>
<div class="t" style="left:101.40px;top:700.84px;font-size:12px;line-height:12px;color:#111;transform:scaleX(0.8727);">Busca de todas as parcelas - Ctrl + 1</div>
<div class="r" style="left:287px;top:700px;width:13px;height:13px;border:1px solid #505050;border-radius:3px;box-sizing:border-box;background:#f4f4f4;"></div>
<div class="t" style="left:306.80px;top:700.34px;font-size:12px;line-height:12px;color:#111;transform:scaleX(0.8642);">Busca exata - Ctrl + 2</div>
<div class="r" style="left:424px;top:612px;width:124px;height:92px;border:1px solid #d9dfe6;box-sizing:border-box;"></div>
<div class="r" style="left:429px;top:604px;width:86px;height:12px;background:#ebf5fe;"></div>
<div class="t" style="left:432.60px;top:606.79px;font-size:11px;line-height:11px;color:#111;transform:scaleX(1.0074);">Status (Ctrl + F)</div>
<div class="r" style="left:430px;top:622.2px;width:13px;height:13px;border-radius:50%;background:#0b5fc0;"></div>
<div class="r" style="left:433.8px;top:626.0px;width:5.4px;height:5.4px;border-radius:50%;background:#fff;"></div>
<div class="t" style="left:448.80px;top:623.29px;font-size:11px;line-height:11px;color:#111;transform:scaleX(0.9622);">Todas as parcelas</div>
<div class="r" style="left:430px;top:637.1px;width:13px;height:13px;border-radius:50%;border:1px solid #4a4a4a;box-sizing:border-box;background:#f3f3f3;"></div>
<div class="t" style="left:448.80px;top:638.19px;font-size:11px;line-height:11px;color:#111;transform:scaleX(0.9793);">Atrasadas</div>
<div class="r" style="left:430px;top:651.7px;width:13px;height:13px;border-radius:50%;border:1px solid #4a4a4a;box-sizing:border-box;background:#f3f3f3;"></div>
<div class="t" style="left:448.80px;top:653.49px;font-size:11px;line-height:11px;color:#111;transform:scaleX(0.9631);">Quitadas</div>
<div class="r" style="left:430px;top:667.8px;width:13px;height:13px;border-radius:50%;border:1px solid #4a4a4a;box-sizing:border-box;background:#f3f3f3;"></div>
<div class="t" style="left:448.80px;top:669.59px;font-size:11px;line-height:11px;color:#111;transform:scaleX(0.9813);">A vencer</div>
<div class="r" style="left:430px;top:683.7px;width:13px;height:13px;border-radius:50%;border:1px solid #4a4a4a;box-sizing:border-box;background:#f3f3f3;"></div>
<div class="t" style="left:448.80px;top:684.89px;font-size:11px;line-height:11px;color:#111;transform:scaleX(0.9946);">A quitar</div>
<div class="r" style="left:556px;top:612px;width:160px;height:89px;border:1px solid #d9dfe6;box-sizing:border-box;"></div>
<div class="r" style="left:561px;top:604px;width:47px;height:12px;background:#ebf5fe;"></div>
<div class="t" style="left:564.60px;top:605.99px;font-size:11px;line-height:11px;color:#111;transform:scaleX(0.9388);">Legenda</div>
<div class="t" style="left:565.00px;top:620.09px;font-size:11px;line-height:11px;color:#111;font-weight:bold;transform:scaleX(1.0525);">Normais não pagas</div>
<div class="t" style="left:565.00px;top:635.39px;font-size:11px;line-height:11px;color:#8c8a26;font-weight:bold;transform:scaleX(1.0452);">Canceladas</div>
<div class="t" style="left:565.00px;top:651.19px;font-size:11px;line-height:11px;color:#1717cf;font-weight:bold;transform:scaleX(1.0718);">Pago com atraso</div>
<div class="t" style="left:565.00px;top:667.29px;font-size:11px;line-height:11px;color:#1b8a1f;font-weight:bold;transform:scaleX(1.0848);">Com pagamento correto</div>
<div class="t" style="left:565.00px;top:682.89px;font-size:11px;line-height:11px;color:#e0161c;font-weight:bold;transform:scaleX(1.0400);">Vencidas</div>
<div class="t" style="left:1088.50px;top:598.46px;font-size:16px;line-height:16px;color:#000;font-weight:bold;transform:scaleX(0.9645);">Total pago:</div>
<div class="t" style="left:1088.50px;top:617.86px;font-size:16px;line-height:16px;color:#000;font-weight:bold;transform:scaleX(0.9787);">Total a pagar:</div>
<div class="t" style="left:1088.50px;top:637.46px;font-size:16px;line-height:16px;color:#000;font-weight:bold;transform:scaleX(0.9711);">Total marcadas:</div>
<div class="t" style="left:1262.00px;top:598.46px;font-size:16px;line-height:16px;color:#000;font-weight:bold;transform:scaleX(1.1030);">37.057,72</div>
<div class="t" style="left:1262.00px;top:617.86px;font-size:16px;line-height:16px;color:#000;font-weight:bold;transform:scaleX(1.1030);">29.987,93</div>
<div class="t" style="left:1305.50px;top:637.46px;font-size:16px;line-height:16px;color:#000;font-weight:bold;transform:scaleX(1.1240);">0,00</div>
<svg class="r" style="left:1356px;top:712px" width="6" height="6"><path d="M6 0V6H0A6 6 0 0 0 6 0Z" fill="#a4a8ac"/></svg>
</body></html>
